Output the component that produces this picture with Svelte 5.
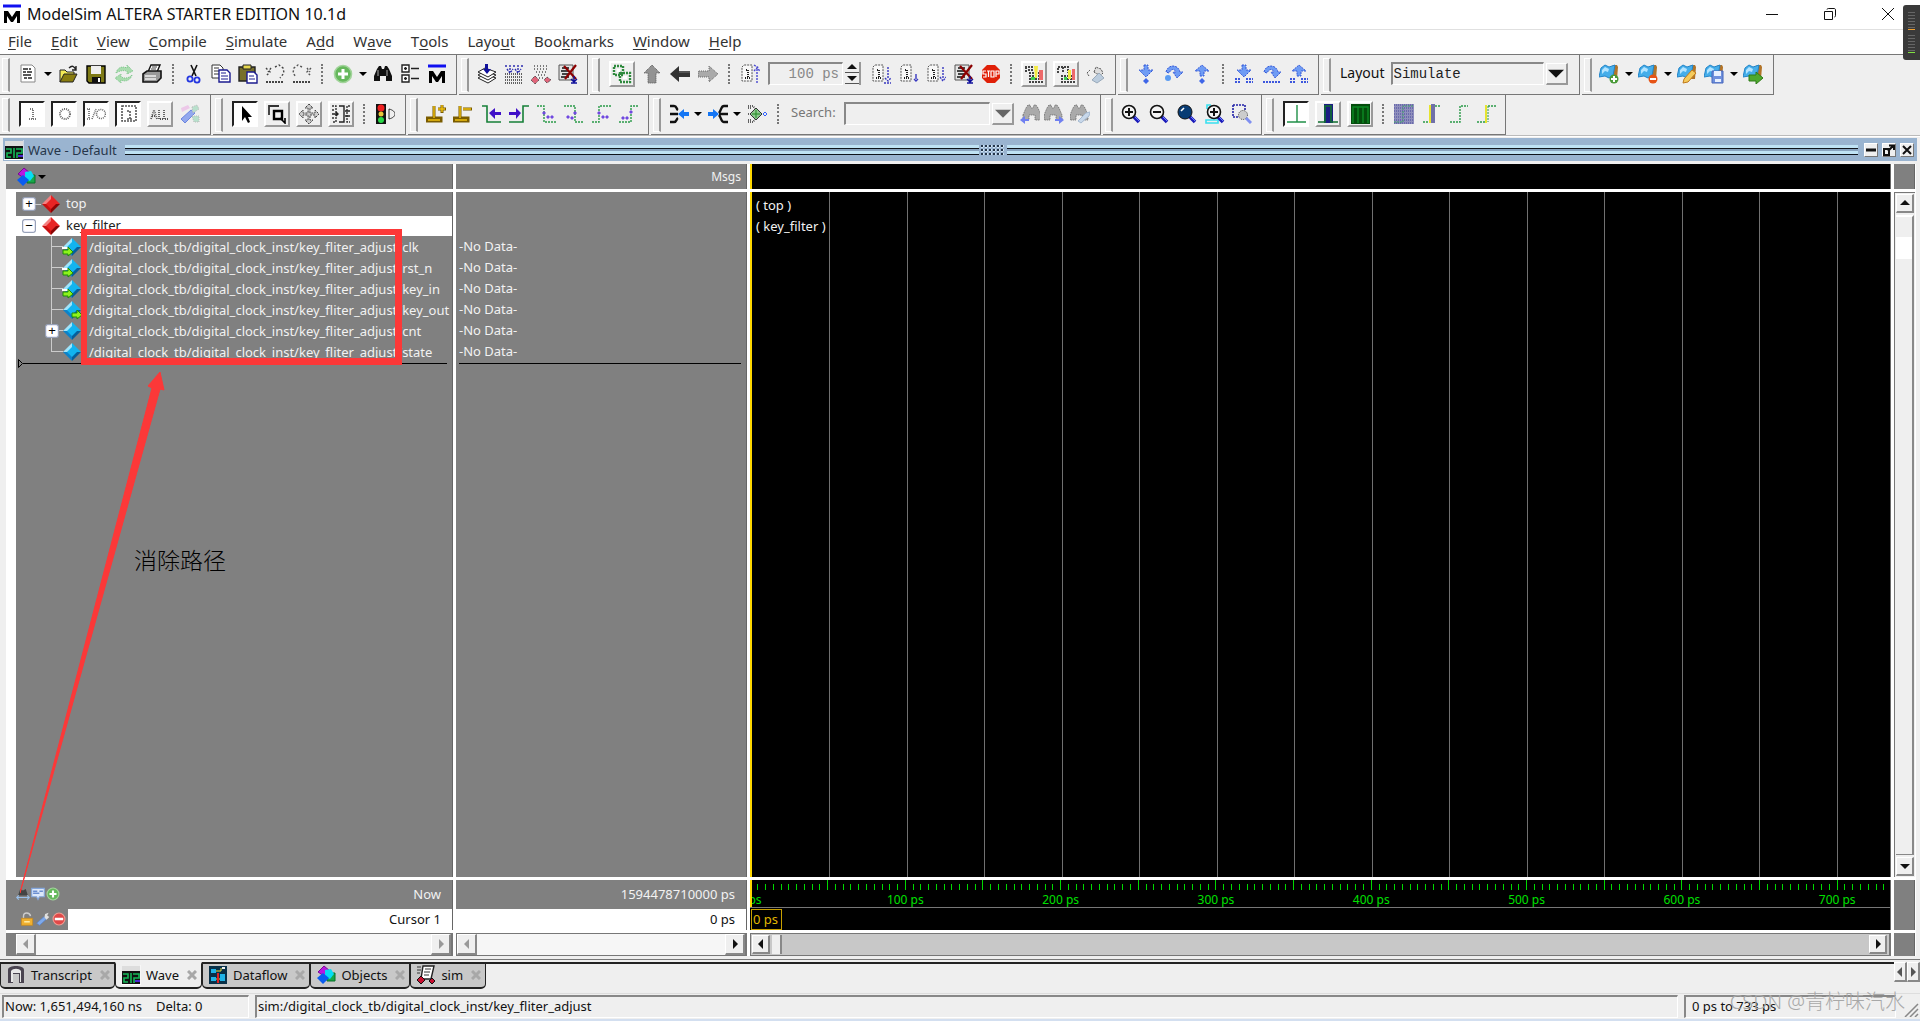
<script>
  const t = (icon, kind = 'tool') => ({ icon, kind });
  const sep = t('', 'sep');
  const more = t('', 'more');

  const toolRows = [
    [
      [t('doc', 'wide'), more, t('open', 'wide'), t('save', 'wide'), t('reload', 'wide'), t('print', 'wide'), sep,
        t('cut'), t('copy'), t('paste'), t('undo'), t('redo'), sep,
        t('add', 'wide'), more, t('find'), t('tree'), t('logo')],
      [t('compile'), t('compileAll'), t('simulate'), t('breakSim')],
      [t('env', 'raised'), t('up', 'wide'), t('back', 'wide'), t('forward', 'wide'), sep, t('restart'), t('', 'time'),
        t('run', 'wide'), t('runStep'), t('runAll', 'wide'), t('breakSim'), t('stop'), sep,
        t('profile', 'raised'), t('memory', 'raised'), t('hand')],
      [t('stepIn', 'wide'), t('stepOver', 'wide'), t('stepOut', 'wide'), sep,
        t('stepInCur', 'wide'), t('stepOverCur'), t('stepOutCur')],
      [t('', 'layout')],
      [t('markAdd'), more, t('markDel'), more, t('markEdit'), t('markSave'), more, t('markGo')]
    ],
    [
      [t('portIn', 'sunken'), t('portOut', 'sunken'), t('portIo', 'sunken'), t('portInt', 'sunken'), t('portAll', 'raised'), t('wand', 'wide')],
      [t('pointer', 'sunken'), t('zoomMode', 'raised'), t('pan', 'raised'), t('edit', 'raised'), sep, t('traffic', 'wide')],
      [t('cursorAdd'), t('cursorDel', 'wide'), t('prevEdge', 'wide'), t('nextEdge', 'wide'), t('prevFall'), t('nextFall', 'wide'), t('prevRise'), t('nextRise')],
      [t('merge'), more, t('split'), more, t('center', 'wide'), sep, t('', 'search'),
        t('findPrev', 'tight'), t('findNext', 'tight'), t('findOpt', 'wide')],
      [t('zoomIn', 'wide'), t('zoomOut', 'wide'), t('zoomFull', 'wide'), t('zoomCursor'), t('zoomRange')],
      [t('waveLow', 'sunken'), t('waveBlue', 'raised'), t('waveGreen', 'raised'), sep, t('fillBlue', 'wide'), t('edgeBlue'), t('edgeGreen'), t('edgeYellow')]
    ]
  ];

  const menus = [
    ['', 'F', 'ile'], ['', 'E', 'dit'], ['', 'V', 'iew'], ['', 'C', 'ompile'], ['', 'S', 'imulate'],
    ['A', 'd', 'd'], ['W', 'a', 've'], ['T', 'o', 'ols'], ['Layo', 'u', 't'], ['Boo', 'k', 'marks'],
    ['', 'W', 'indow'], ['', 'H', 'elp']
  ];

  const scope = '/digital_clock_tb/digital_clock_inst/key_fliter_adjust/';
  const signals = [
    { name: 'clk', icon: 'sigIn' },
    { name: 'rst_n', icon: 'sigIn' },
    { name: 'key_in', icon: 'sigIn' },
    { name: 'key_out', icon: 'sigOut' },
    { name: 'cnt', icon: 'sig', expandable: true },
    { name: 'state', icon: 'sig' }
  ];

  const tabs = [
    { name: 'Transcript', icon: 'transcript' },
    { name: 'Wave', icon: 'waveform', active: true },
    { name: 'Dataflow', icon: 'dataflow' },
    { name: 'Objects', icon: 'objects' },
    { name: 'sim', icon: 'sim' }
  ];

  // visible time range of the wave pane, in ps
  const range = 734;
  const pct = (ps) => `${(ps / range) * 100}%`;
  const grid = Array.from({ length: 14 }, (_, i) => (i + 1) * 50);
  const ticks = Array.from({ length: 146 }, (_, i) => (i + 1) * 5);
  const labels = Array.from({ length: 8 }, (_, i) => i * 100);

  // shared pieces of the icons
  const redX = '<path d="M6 2L18 15M18 1L7 15" stroke="#8b0000" stroke-width="2.2"/>';
  const flag = '<path d="M11 5l3-4h4l1 2-1 12h-4z" fill="#b27428"/><path d="M0 13l2-9 4-3 4 2 6-2-2 11-4 2-4-2z" fill="#45aeea" stroke="#2384c8"/><path d="M3 6l3-3 4 2-1 3-3-1-3 3z" fill="#b4e4ff"/>';
  const lens = '<path d="M12 12l6 6" stroke="#1a1ab8" stroke-width="3.6"/><path d="M13 12l5 5" stroke="#6a7dff"/>';
  const binoc = '<path d="M1 12l3-7 2-3h2l1 3h2l1-3h2l2 3 3 7v5h-6v-5H7v5H1z"/>';
  const stepDoc = '<path d="M2 3l2-2h8v16H2z" stroke="#555" stroke-dasharray="2 1" fill="#f8f8f8"/><path d="M6 6h2v8M5 14h6" stroke="#222" stroke-width="2" stroke-dasharray="1 1"/>';
  const box = '<path d="M1 1h14v15H1z" fill="#e4e4e4" stroke="#555"/><path d="M4 4h7M3 7h8M4 10h7M3 13h8" stroke="#111" stroke-width="1.6"/>';
  const gem = (a, b, c, d) => `<path d="M10 1L1 10h9z" fill="${a}"/><path d="M10 1l9 9h-9z" fill="${b}"/><path d="M1 10l9 9v-9z" fill="${c}"/><path d="M19 10l-9 9v-9z" fill="${d}"/><path d="M10 5l5 5-5 5-5-5z" fill="${b}"/>`;
  const blueGem = gem('#9fe4fb', '#12b4ef', '#0c82c8', '#075f9a');
  const greenArrow = '<path d="M1 13h5v-3l5 5-5 4v-2H1z" fill="#8df31c" stroke="#1d8b0a"/>';
  const cubes = '<path d="M11 8h8v8h-8z" fill="#18a848" stroke="#087028"/><path d="M2 7l6-6 6 5-6 5z" fill="#b818e0" stroke="#7a0894"/><path d="M9 5l6-1 3 5-4 5-5-2z" fill="#08dcf4"/><path d="M7 8l6 5-6 6-6-6z" fill="#0a5cf0"/>';
  const M = '<path d="M1 2h18" stroke="#1010f0" stroke-width="3"/><path d="M2 19V7h4l4 6 4-6h4v12h-3v-7l-4 6h-2l-4-6v7z" fill="#000"/>';
  const plus = '<circle cx="10" cy="10" r="8.5" fill="#66b85c" stroke="#a3d49c" stroke-width="1.6"/><path d="M10 5v10M5 10h10" stroke="#fff" stroke-width="3"/>';
  const blue = 'fill="#6f9cf4" stroke="#3458d8" stroke-dasharray="2 1"';
  const down = `<path d="M8 1h4v5h5l-7 7-7-7h5z" ${blue}/>`;
  const over = `<path d="M2 8c2-8 12-8 14 0h3l-6 6-4-6h3c-2-4-5-3-7 1z" ${blue}/>`;
  const upArrow = `<path d="M8 12h4V7h5l-7-6-7 6h5z" ${blue}/>`;
  const dots = '<path d="M1 15h6M12 15h7M1 18h6M12 18h7" stroke="#3d57dd" stroke-width="2" stroke-dasharray="2 1"/>';
  const edgeMark = (x, y) => `<path d="M${x} ${y - 2}l2 2-2 2-2-2z" fill="#7048e0"/>`;

  const icons = {
    logo: M,
    doc: '<path d="M3 1h11l3 3v14H3z" fill="#fff" stroke="#888"/><path d="M5 5h5M11 5h2M5 8h3M9 8h5M5 11h8M6 14h3M10 14h4" stroke="#222" stroke-width="1.4"/>',
    open: '<path d="M2 18V6h5l2 2h7v3" fill="#f4ea54" stroke="#222"/><path d="M2 18l4-8h13l-4 8z" fill="#8a7d10" stroke="#222"/><path d="M11 4c3-3 5-2 7 2M18 2v4h-4" stroke="#222" stroke-width="1.4"/>',
    save: '<path d="M1 2h18v17H3l-2-2z" fill="#7e7a16" stroke="#000" stroke-width="1.4"/><path d="M5 2h10v8H5z" fill="#eee"/><path d="M6 13h9v6H6z" fill="#111"/><path d="M12 14h2v4h-2z" fill="#fff"/>',
    reload: '<path d="M2 9c2-6 6-7 11-5V1l6 6-6 3V7C9 6 5 7 2 9zM18 11c-2 6-7 7-11 5v3l-6-5 6-4v3c4 2 8 1 11-2z" fill="#a9dcae" stroke="#7cc48a" stroke-dasharray="1 1"/>',
    print: '<path d="M6 8l3-7h9l-3 7z" fill="#fff" stroke="#111" stroke-width="1.4"/><path d="M1 10l4-3h14v7l-4 4H1z" fill="#999" stroke="#111" stroke-width="1.6"/><path d="M3 12h11M3 15h11" stroke="#eee" stroke-width="1.4"/><path d="M10 3h5M9 5h5" stroke="#444"/>',
    cut: '<path d="M7 1l5 11M13 1L8 12" stroke="#111" stroke-width="1.6"/><circle cx="6" cy="15" r="2.6" stroke="#2436e0" stroke-width="1.8"/><circle cx="13" cy="16" r="2.6" stroke="#2436e0" stroke-width="1.8"/>',
    copy: '<path d="M1 1h8l3 3v10H1z" fill="#fff" stroke="#333"/><path d="M3 4h5M3 7h7M3 10h7" stroke="#333"/><path d="M8 6h8l3 3v9H8z" fill="#fff" stroke="#1c1c90" stroke-width="1.4"/><path d="M10 9h5M10 12h7M10 15h7" stroke="#1c1c90"/>',
    paste: '<path d="M1 3h16v14H1z" fill="#77702a" stroke="#222" stroke-width="1.4"/><path d="M5 1h8v4H5z" fill="#e6d84e" stroke="#222"/><path d="M9 8h7l3 3v8H9z" fill="#fff" stroke="#1c1c90" stroke-width="1.4"/><path d="M11 12h5M11 15h6" stroke="#1c1c90"/>',
    undo: '<path d="M1 4l4 4-4 4M6 4l-3 4M10 3l4-2 4 3 1 5-4 5" stroke="#444" stroke-width="1.4" stroke-dasharray="2 2"/><path d="M1 18h18" stroke="#444" stroke-width="2" stroke-dasharray="2 1"/>',
    redo: '<path d="M19 4l-4 4 4 4M15 4l3 4M10 3L6 1 2 4 1 9l3 4" stroke="#555" stroke-width="1.4" stroke-dasharray="2 2"/><path d="M1 18h18" stroke="#444" stroke-width="2" stroke-dasharray="2 1"/>',
    add: plus,
    find: '<g fill="#111">' + binoc + '</g><path d="M5 6v6M14 6v6" stroke="#aaa"/>',
    tree: '<path d="M2 1h7v7H2zM2 11h7v7H2z" fill="#fff" stroke="#222" stroke-width="1.4"/><path d="M5.500 3v3M4 4.500h3M5.500 13v3M4 14.500h3M11 4.500h8M11 14.500h8" stroke="#222" stroke-width="1.4"/>',
    compile: '<path d="M1 14l7-4 11 4-8 5z" fill="#fff" stroke="#222"/><path d="M1 11l7-4 11 4-8 5z" fill="#fff" stroke="#222"/><path d="M1 8l7-4 11 4-8 5z" fill="#fff" stroke="#222"/><path d="M8 0h3v5h3l-4 5-4-5h2z" fill="#10109c"/>',
    compileAll: '<path d="M1 10h18M1 13h18M1 16h18M1 19h18" stroke="#333" stroke-width="1.4" stroke-dasharray="1 1"/><path d="M6 1v7M14 1v7M3 5l3 4 3-4M11 5l3 4 3-4M1 2h2M9 2h2M17 2h2" stroke="#2c2cb0" stroke-width="1.4" stroke-dasharray="2 1"/>',
    simulate: '<path d="M3 2h14M3 5h14M5 8h12M7 11h9M8 14h5" stroke="#555" stroke-width="1.6" stroke-dasharray="1 2"/><path d="M4 12l4 4-4 4-4-4zM16 13l4 3-4 3-3-3z" fill="#e0647a" stroke="#333" stroke-dasharray="1 1"/>',
    breakSim: box + redX + '<path d="M16 12v6M13 15l3 3 3-3M13 19h6" stroke="#10109c" stroke-width="1.4"/>',
    env: '<path d="M2 2h9v9H2zM8 9h10v9H8z" stroke="#2f8a3e" stroke-width="2.4" stroke-dasharray="2 1"/><path d="M5 5h3v3H5zM11 12h4v3h-4z" fill="#fff"/>',
    up: '<path d="M10 1l8 8h-4v10H6V9H2z" fill="#929292" stroke="#555" stroke-dasharray="1 1"/>',
    back: '<path d="M0 10l9-8v5h11v6H9v5z" fill="#333"/><path d="M9 8h11" stroke="#777"/>',
    forward: '<path d="M20 10l-9-8v5H0v6h11v5z" fill="#aaa" stroke="#666" stroke-dasharray="1 1"/>',
    restart: stepDoc + '<path d="M17 19V5M14 7l3-3 3 3M14 1l5 3" stroke="#4848d0" stroke-width="1.4" stroke-dasharray="2 1"/>',
    run: stepDoc + '<path d="M17 3v12M14 14l3 3 3-3M13 19h7" stroke="#3838c0" stroke-width="1.4" stroke-dasharray="2 1"/>',
    runStep: stepDoc + '<path d="M17 10v5M15 15l2 2 2-2" stroke="#3838c0" stroke-width="1.4"/>',
    runAll: stepDoc + '<path d="M17 3v12M14 13l3 4 3-4" stroke="#3838c0" stroke-width="1.4" stroke-dasharray="2 1"/>',
    stop: '<path d="M6 1h8l5 5v8l-5 5H6l-5-5V6z" fill="#e02008"/><path d="M5 7H2v3h3v3H2M6 7h3M7.500 7v6M10 7h3v6h-3zM15 13V7h3v3h-3" stroke="#fff" stroke-width="1.2"/>',
    profile: '<path d="M1 3h7v3H3M2 3v6M5 9h12M5 12h12M5 15h12M5 18h14" stroke="#444" stroke-width="2" stroke-dasharray="2 1"/><path d="M10 2h4l-1 12h-2z" fill="#f4ea42"/><path d="M15 6h4v10h-4z" fill="#ee6a6a"/><path d="M7 13h4v3H7z" fill="#3fd050"/>',
    memory: '<path d="M2 9V3h10v6M7 3v6M5 12h12M5 15h12M5 18h14" stroke="#444" stroke-width="2" stroke-dasharray="2 1"/><path d="M12 6h3v9h-3z" fill="#f4ea42"/><path d="M16 5h3v11h-3z" fill="#ee6a6a"/><path d="M8 13h3v3H8z" fill="#3fd050"/>',
    hand: '<path d="M1 9l3-3M3 12L1 9M8 8l2-5 2 1 3 1 2 4-2 2-4-1z" stroke="#555" fill="#ddd" stroke-dasharray="2 1"/><path d="M6 16l7-7 5 5-7 5z" fill="#bcd" stroke="#9ab"/>',
    stepIn: down + '<path d="M10 14l3 3-3 3-3-3z" fill="#3f66e8"/>',
    stepOver: over + '<circle cx="4" cy="14" r="3" fill="#5b9cf2"/>',
    stepOut: upArrow + '<path d="M10 14l3 3-3 3-3-3z" fill="#3f66e8"/>',
    stepInCur: down + dots, stepOverCur: over + '<path d="M1 18h18" stroke="#3d57dd" stroke-width="2" stroke-dasharray="2 1"/>', stepOutCur: upArrow + dots,
    markAdd: flag + '<circle cx="15" cy="15" r="4.500" fill="#4a9a38"/><path d="M15 12v6M12 15h6" stroke="#fff" stroke-width="2"/>',
    markDel: flag + '<circle cx="15" cy="15" r="4.500" fill="#e65316"/><path d="M12 15h6" stroke="#fff" stroke-width="2"/>',
    markEdit: flag + '<path d="M6 19l1-4 8-9 4 3-8 9z" fill="#f5cb5c" stroke="#c07a1c"/>',
    markSave: flag + '<path d="M8 7h11v12H8z" fill="#6f90dc" stroke="#4766bc"/><path d="M10 7h7v5h-7zM11 15h6v3h-6z" fill="#e8f0ff"/>',
    markGo: flag + '<path d="M6 11h7V8l7 6-7 6v-3H6z" fill="#4ea82e" stroke="#2f7c18"/>',
    portIn: '<path d="M8 5h3v10M7 15h7" stroke="#777" stroke-width="2" stroke-dasharray="1 1"/>',
    portOut: '<circle cx="11" cy="10" r="5" stroke="#666" stroke-width="2" stroke-dasharray="1 1"/>',
    portIo: '<path d="M1 5h4M3 5v10M1 15h4M6 15l4-10" stroke="#666" stroke-width="1.600" stroke-dasharray="1 1"/><circle cx="15" cy="10" r="4.500" stroke="#666" stroke-width="1.600" stroke-dasharray="1 1"/>',
    portInt: '<path d="M4 2h14v15H4zM9 7h3v8M9 15h6" stroke="#555" stroke-width="1.600" stroke-dasharray="2 1"/>',
    portAll: '<path d="M1 15l3-9 3 9M2 12h4M9 6v9h4M14 6v9h5" stroke="#555" stroke-width="1.800" stroke-dasharray="1 1"/>',
    wand: '<path d="M1 15L11 6l4 3L5 19z" fill="#92a8ee" stroke="#6c85df"/><path d="M1 4l7-3 2 3-8 4z" fill="#ecc8e8"/><path d="M12 3l5-2 2 4-6 4zM12 12h7v6h-5z" fill="#b8e0cc" stroke="#bbb" stroke-dasharray="1 1"/>',
    pointer: '<path d="M7 2v15l3-4 3 6 2-1-2-5h4z" fill="#000"/>',
    zoomMode: '<path d="M2 11V2h10" stroke="#333" stroke-width="1.8"/><path d="M7 7h8v8H7z" stroke="#000" stroke-width="2.400"/><path d="M13 14l5 5v-5" stroke="#000" stroke-width="1.6"/>',
    pan: '<path d="M10 0l4 4h-3v5h5V6l4 4-4 4v-3h-5v5h3l-4 4-4-4h3v-5H4v3l-4-4 4-4v3h5V4H6z" fill="#ccc" stroke="#444" stroke-dasharray="2 1"/>',
    edit: '<path d="M1 2h4v16H1M19 2h-3v16h3M1 6h3M1 14h3" stroke="#333" stroke-width="1.400" stroke-dasharray="2 1"/><path d="M8 2h5v16H8M1 10h6M14 7h5M14 12h5M5 8l2 2-2 2" stroke="#222" stroke-width="1.400"/>',
    traffic: '<path d="M1 0h10v20H1z" fill="#111"/><circle cx="6" cy="4" r="3.500" fill="#f02020"/><circle cx="6" cy="10" r="2.500" fill="#e8c838"/><circle cx="6" cy="16" r="3" fill="#28d848"/><path d="M14 5c4 1 6 3 6 5s-2 4-6 5z" stroke="#333"/>',
    cursorAdd: '<path d="M8 2v12M1 17h14v-3H1zM12 5h8M16 1v8" stroke="#7a5c00" stroke-width="3"/><path d="M8 2v12M2 16h12M12 5h7M16 1v7" stroke="#f0c010" stroke-width="1.400"/>',
    cursorDel: '<path d="M7 2v12M1 17h14v-3H1zM10 5h9" stroke="#7a5c00" stroke-width="3"/><path d="M7 2v12M2 16h12M10 5h8" stroke="#f0c010" stroke-width="1.400"/>',
    prevEdge: '<path d="M1 2h5v16h14" stroke="#168038" stroke-width="1.600"/><path d="M8 9l6-5v4h6v3h-6v4z" fill="#4010c8"/>',
    nextEdge: '<path d="M0 18h14V2h6" stroke="#168038" stroke-width="1.600"/><path d="M12 9L7 4v4H0v3h7v4z" fill="#4010c8"/>',
    prevFall: '<path d="M0 2h7v16h13" stroke="#2a9a48" stroke-width="1.400" stroke-dasharray="2 1"/>' + edgeMark(7, 9) + edgeMark(11, 13) + edgeMark(15, 13),
    nextFall: '<path d="M0 2h11v16h9" stroke="#2a9a48" stroke-width="1.400" stroke-dasharray="2 1"/>' + edgeMark(11, 9) + edgeMark(4, 13) + edgeMark(8, 14),
    prevRise: '<path d="M0 18h7V2h12" stroke="#2a9a48" stroke-width="1.400" stroke-dasharray="2 1"/>' + edgeMark(7, 9) + edgeMark(11, 13) + edgeMark(15, 13),
    nextRise: '<path d="M0 18h12V2h8" stroke="#2a9a48" stroke-width="1.400" stroke-dasharray="2 1"/>' + edgeMark(12, 8) + edgeMark(4, 14) + edgeMark(8, 14),
    merge: '<path d="M1 2h4c3 0 2 3 4 4M1 18h4c3 0 2-3 4-4M1 10h8" stroke="#111" stroke-width="2.400"/><path d="M9 10l6-5v3h5v4h-5v3z" fill="#1476f4"/>',
    split: '<path d="M20 2h-4c-3 0-2 3-5 7M20 18h-4c-3 0-2-3-5-7M20 10h-9" stroke="#111" stroke-width="2.400"/><path d="M11 10L5 5v3H0v4h5v3z" fill="#1476f4"/>',
    center: '<path d="M1 2h5l3 4M1 18h5l3-4M1 4h4M1 16h4M1 10h4" stroke="#333" stroke-width="1.600" stroke-dasharray="1 1"/><path d="M9 4l6 6-6 6-6-6z" fill="#8fc890" stroke="#333"/><path d="M9 6v8M5 10h8" stroke="#228b22"/><path d="M18 8l2 2-2 2-2-2z" stroke="#3060ff"/>',
    findPrev: '<g fill="#aaa" stroke="#666" stroke-dasharray="1 1" transform="translate(2 -1)">' + binoc + '</g><path d="M0 16l5-4v3h4v2H5v3z" fill="#7080f0"/>',
    findNext: '<g fill="#aaa" stroke="#666" stroke-dasharray="1 1" transform="translate(-1 -1)">' + binoc + '</g><path d="M20 16l-5-4v3h-4v2h4v3z" fill="#7080f0"/>',
    findOpt: '<g fill="#aaa" stroke="#666" stroke-dasharray="1 1" transform="translate(-1 -1)">' + binoc + '</g><path d="M8 17l8-8 4-1-1 4-8 7z" fill="#c8d8ea" stroke="#a5b9d0"/>',
    zoomIn: lens + '<circle cx="8" cy="8" r="6.500" fill="#f4f4f4" stroke="#111" stroke-width="1.600"/><path d="M8 4v8M4 8h8" stroke="#111" stroke-width="2"/>',
    zoomOut: lens + '<circle cx="8" cy="8" r="6.500" fill="#f4f4f4" stroke="#111" stroke-width="1.600"/><path d="M4 8h8" stroke="#111" stroke-width="2"/>',
    zoomFull: lens + '<circle cx="8" cy="8" r="7" fill="#083c74" stroke="#111"/><path d="M4 7l3-3" stroke="#fff" stroke-width="1.600"/>',
    zoomCursor: '<path d="M1 16h12v3H1zM2 5V1h4" stroke="#38e0f0" stroke-width="1.6"/>' + lens + '<circle cx="9" cy="8" r="6.500" fill="#f4f4f4" stroke="#111" stroke-width="1.600"/><path d="M9 4v8M5 8h8" stroke="#111" stroke-width="2"/>',
    zoomRange: '<path d="M1 1h12v5M1 1v12h6" stroke="#2222a8" stroke-width="1.600" stroke-dasharray="2 1"/><circle cx="11" cy="11" r="4.500" fill="#ccc" stroke="#444" stroke-dasharray="1 1"/><path d="M14 14l5 5" stroke="#7f8ff0" stroke-width="3"/>',
    waveLow: '<path d="M1 18h19M11 1v17" stroke="#209048" stroke-width="1.400"/>',
    waveBlue: '<path d="M6 0h9v19H6z" fill="#1c1c84"/><path d="M0 18h7V2h6v16h7" stroke="#107030" stroke-width="1.600"/>',
    waveGreen: '<path d="M1 0h19v20H1z" fill="#044c0c"/><path d="M3 19V3h5v16M8 15V3h5v16M13 3h5v16" stroke="#0c8a24" stroke-width="1.400"/>',
    fillBlue: '<path d="M0 0h20v20H0z" fill="#8f8fbc"/><path d="M0 1h20M0 4h20M0 7h20M0 10h20M0 13h20M0 16h20M0 19h20" stroke="#46469c" stroke-dasharray="1 1"/><path d="M0 18h9V2h11" stroke="#3f9f68" stroke-dasharray="2 1"/>',
    edgeBlue: '<path d="M9 0h4v19H9z" fill="#7070a8"/><path d="M1 18h6M13 2h6" stroke="#2a9a48" stroke-width="1.400" stroke-dasharray="2 1"/><path d="M8 1v18" stroke="#e6e430" stroke-width="2"/>',
    edgeGreen: '<path d="M1 18h10V2h8" stroke="#2a9a48" stroke-width="1.400" stroke-dasharray="2 1"/>',
    edgeYellow: '<path d="M1 18h9M12 2h8" stroke="#2a9a48" stroke-width="1.400" stroke-dasharray="2 1"/><path d="M10 1v18" stroke="#e6e430" stroke-width="2"/><path d="M12 2v16" stroke="#2a9a48" stroke-dasharray="2 1"/>',
    group: gem('#f58080', '#e82424', '#c81010', '#8c0404'),
    sig: blueGem,
    sigIn: blueGem + '<path d="M0 11h6" stroke="#fff" stroke-width="2"/>' + greenArrow,
    sigOut: blueGem + '<g transform="translate(9 0)">' + greenArrow + '</g>',
    objects: cubes,
    waveform: '<path d="M1 1h18v18H1z" fill="#111"/><path d="M1 1h18v5H1z" fill="#ddd"/><path d="M2 9h5v4H3v4h4M10 8v10M12 9h6v4h-5v5" stroke="#14b858" stroke-width="1.600"/><path d="M14 16h5" stroke="#4a28d0" stroke-width="2"/><path d="M0 19.500h20V0" stroke="#fff"/>',
    transcript: '<path d="M2 18V5c0-3 4-4 8-4s8 1 8 4v13h-5V9H7v9z" fill="#4a4450"/><path d="M5 17V6c2-3 8-3 10 0v11h-1V8H7v9z" fill="#e8e8e8"/>',
    dataflow: '<path d="M1 1h18v18H1z" fill="#083048"/><path d="M3 4h5v4H3zM3 12h5v4H3zM12 9h5v7h-5z" fill="#20b4e8"/><path d="M8 6h5V3M8 14h4" stroke="#f0e040"/><path d="M10 8v10" stroke="#e02020" stroke-width="2"/><path d="M14 3h3" stroke="#eee" stroke-width="2"/>',
    sim: '<path d="M7 1h11l-3 13H5z" fill="#fff" stroke="#222" stroke-width="1.400"/><path d="M9 4h6M8 7h6M8 10h5M1 2h4M1 5h4M1 8h3" stroke="#333"/><path d="M5 11l4 4-4 4-4-4zM16 13l3 3-3 3-3-3z" fill="#c81030" stroke="#111"/>',
    minus: '<circle cx="10" cy="10" r="8.500" fill="#e04848" stroke="#f09a90" stroke-width="1.600"/><path d="M4 10h12" stroke="#fff" stroke-width="3.600"/>',
    plus,
    lock: '<path d="M5 9V6c0-6 9-6 10 0" stroke="#ccc" stroke-width="2"/><path d="M2 9h16v10H2z" fill="#f0b030" stroke="#c88818"/><path d="M6 14h8" stroke="#fff2b0" stroke-width="2"/>',
    wrench: '<path d="M1 16L11 7l4 3L5 19z" fill="#7ea9ea" stroke="#5684d2"/><path d="M12 8l1-5 5-2-2 4 3 2-4 4z" fill="#e0e0e0"/>',
    pathToggle: '<g fill="#444"><path d="M3 12l3-9 4 2 4-2 3 9z"/></g><path d="M1 15h18M4 12l-3 3 3 3M16 12l3 3-3 3" stroke="#9ac0ea" stroke-width="1.600"/>',
    panel: '<path d="M1 2h18v12h-7l-2 4-2-4H1z" fill="#dce8fa" stroke="#84a6dc" stroke-width="1.600"/><path d="M3 6h6M3 9h9M12 6h5" stroke="#6b8ed0" stroke-width="2"/>'
  };

  let layout = $state('Simulate');
  let runLength = $state('100 ps');
  let query = $state('');
</script>

{#snippet icon(name, cls = '')}
  <svg class="icon {cls}" viewBox="0 0 20 20" fill="none" aria-hidden="true">{@html icons[name]}</svg>
{/snippet}

{#snippet arrow(dir)}
  <svg class="arrow {dir}" viewBox="0 0 10 10" aria-hidden="true"><path d="M7 0v10L2 5z" fill="currentColor" /></svg>
{/snippet}

{#snippet tool(item)}
  {#if item.kind === 'sep'}
    <span class="sep"></span>
  {:else if item.kind === 'more'}
    <button class="more" aria-label="More"></button>
  {:else if item.kind === 'time'}
    <div class="time">
      <input class="field" aria-label="Run length" bind:value={runLength} />
      <div class="spin">
        <button aria-label="Increase">{@render arrow('up')}</button>
        <button aria-label="Decrease">{@render arrow('down')}</button>
      </div>
    </div>
  {:else if item.kind === 'layout'}
    <div class="combo">
      <label for="layout">Layout</label>
      <select id="layout" class="field" bind:value={layout}>
        <option>Simulate</option>
      </select>
      <span class="drop">{@render arrow('down')}</span>
    </div>
  {:else if item.kind === 'search'}
    <div class="search">
      <label for="search">Search:</label>
      <input id="search" class="field" bind:value={query} />
      <button class="drop" aria-label="Search history">{@render arrow('down')}</button>
    </div>
  {:else}
    <button class="tool {item.kind}" aria-label={item.icon}>{@render icon(item.icon)}</button>
  {/if}
{/snippet}

{#snippet hscroll(cls)}
  <div class="hscroll {cls}">
    <button aria-label="Scroll left">{@render arrow('left')}</button>
    <span class="thumb"></span>
    <span class="trough"></span>
    <button class="end" aria-label="Scroll right">{@render arrow('right')}</button>
  </div>
{/snippet}

<div class="app">
  <header class="title">
    {@render icon('logo')}
    <h1>ModelSim ALTERA STARTER EDITION 10.1d</h1>
    <button aria-label="Minimize"><svg viewBox="0 0 12 12"><path d="M0 6.500h12" /></svg></button>
    <button aria-label="Restore"><svg viewBox="0 0 12 12"><path d="M.5 3.500h8v8h-8zM3 1.500c0-1 1-1 2-1h5c1 0 1.500.5 1.500 1.500v5c0 1 0 2-1 2" /></svg></button>
    <button aria-label="Close"><svg viewBox="0 0 12 12"><path d="M0 0l12 12M12 0L0 12" /></svg></button>
  </header>

  <nav class="menu">
    {#each menus as [pre, key, post]}
      <button>{pre}<u>{key}</u>{post}</button>
    {/each}
  </nav>

  <div class="toolbars">
    {#each toolRows as row}
      <div class="row">
        {#each row as bar}
          <div class="bar">
            {#each bar as item}
              {@render tool(item)}
            {/each}
          </div>
        {/each}
      </div>
    {/each}
  </div>

  <main class="window">
    <div class="caption">
      {@render icon('waveform')}
      <h2>Wave - Default</h2>
      <span class="stripes"></span>
      <span class="dots"></span>
      <span class="stripes"></span>
      <button aria-label="Hide"><svg viewBox="0 0 12 12"><path d="M1 6h10" stroke-width="3" /></svg></button>
      <button aria-label="Undock"><svg viewBox="0 0 12 12"><path d="M1 5h5v6H1zM5 7l5-5M6 1.500h5V6" /></svg></button>
      <button aria-label="Close"><svg viewBox="0 0 12 12"><path d="M2 2l8 8M10 2l-8 8" /></svg></button>
    </div>

    <div class="panes">
      <div class="cell head">
        {@render icon('objects')}
        <button class="more" aria-label="More"></button>
      </div>
      <div class="cell head msgs">Msgs</div>
      <div class="cell black cursor"></div>
      <div class="cell"></div>

      <div class="cell names">
        <div class="group">
          <button class="toggle" aria-label="Expand top">+</button>
          <i class="dash"></i>
          {@render icon('group')}
          <span>top</span>
        </div>
        <div class="group selected">
          <button class="toggle" aria-label="Collapse key_filter">−</button>
          <i class="blank"></i>
          {@render icon('group')}
          <span>key_filter</span>
        </div>
        {#each signals as s}
          <div class="signal">
            <i class="branch"></i>
            {#if s.expandable}<button class="toggle" aria-label="Expand {s.name}">+</button>{/if}
            {@render icon(s.icon)}
            <span>{scope}{s.name}</span>
          </div>
        {/each}
        <div class="insert">
          <svg viewBox="0 0 5 9"><path d="M.5.500v8l4-4z" fill="none" stroke="#000" /></svg>
        </div>
      </div>

      <div class="cell values">
        {#each signals as s}
          <div>-No Data-</div>
        {/each}
        <div class="rule"></div>
      </div>

      <div class="cell black cursor waves">
        <svg class="grid">
          {#each grid as ps}
            <line x1={pct(ps)} x2={pct(ps)} y1="0" y2="100%" />
          {/each}
        </svg>
        <div class="wave-label">( top )</div>
        <div class="wave-label">( key_filter )</div>
      </div>

      <div class="vscroll">
        <button aria-label="Scroll up">{@render arrow('up')}</button>
        <span class="vthumb"></span>
        <button aria-label="Scroll down">{@render arrow('down')}</button>
      </div>

      <div class="cell foot">
        <div class="now">
          {@render icon('pathToggle', 'small')}
          {@render icon('panel', 'small')}
          {@render icon('plus', 'small')}
          <span>Now</span>
        </div>
        <div class="cur">
          {@render icon('lock', 'small')}
          {@render icon('wrench', 'small')}
          {@render icon('minus', 'small')}
          <span>Cursor 1</span>
        </div>
      </div>
      <div class="cell foot">
        <div class="now"><span>1594478710000 ps</span></div>
        <div class="cur"><span>0 ps</span></div>
      </div>
      <div class="cell black time-axis">
        <svg class="ruler">
          {#each ticks as ps}
            <line x1={pct(ps)} x2={pct(ps)} y1={ps % 50 ? 4 : 0} y2="10" />
          {/each}
          {#each labels as ps}
            <text x={pct(ps)} y="24" text-anchor="middle">{ps} ps</text>
          {/each}
          <line class="now-line" x1="1" x2="1" y1="0" y2="28" />
        </svg>
        <div class="cursor-time"><span>0 ps</span></div>
      </div>
      <div class="cell"></div>

      {@render hscroll('name-scroll')}
      {@render hscroll('value-scroll')}
      {@render hscroll('wave-scroll')}
      <div class="cell"></div>
    </div>
  </main>

  <div class="tabs">
    {#each tabs as tab}
      <div class="tab" class:active={tab.active}>
        {@render icon(tab.icon)}
        <button class="name">{tab.name}</button>
        <button class="x" aria-label="Close {tab.name}"><svg viewBox="0 0 10 10"><path d="M1 1l8 8M9 1L1 9" /></svg></button>
      </div>
    {/each}
    <span class="fill"></span>
    <button class="step" aria-label="Previous tab">{@render arrow('left')}</button>
    <button class="step" aria-label="Next tab">{@render arrow('right')}</button>
  </div>

  <footer class="status">
    <div class="time-now"><span>Now: 1,651,494,160 ns</span><span>Delta: 0</span></div>
    <div class="scope">sim:/digital_clock_tb/digital_clock_inst/key_fliter_adjust</div>
    <div class="span">0 ps to 733 ps</div>
    <svg class="sizer" viewBox="0 0 14 14"><path d="M1 14L14 1M6 14l8-8M11 14l3-3" stroke="#888" stroke-width="1.500" /></svg>
  </footer>

  <!-- annotations laid over the window -->
  <div class="highlight"></div>
  <svg class="pointer" viewBox="0 0 146 522"><path d="M0 521L132 16l-4-2L140 0l4 18-4-1z" fill="#fc3838" stroke="#fc3838" /></svg>
  <div class="note">消除路径</div>
  <div class="watermark">CSDN @青柠味汽水</div>
  <div class="meter"><i></i><i></i></div>
</div>

<style>
  :global(body) {
    margin: 0;
    background: #efefef;
  }
  .app {
    position: relative;
    display: flex;
    flex-direction: column;
    min-height: 100vh;
    box-sizing: border-box;
    border-bottom: 2px solid #d3dff0;
    background: #efefef;
    color: #111;
    font: 13px/20px "Noto Sans", "Open Sans", sans-serif;
    overflow: hidden;
  }
  .app * {
    box-sizing: border-box;
  }
  button {
    display: flex;
    align-items: center;
    justify-content: center;
    margin: 0;
    padding: 0;
    border: 0;
    background: none;
    color: inherit;
    font: inherit;
  }
  h1, h2 {
    margin: 0;
    font-weight: 400;
  }
  svg {
    display: block;
    flex: none;
  }
  .icon {
    width: 20px;
    height: 20px;
  }
  .icon.small {
    width: 14px;
    height: 14px;
  }
  .arrow {
    width: 10px;
    height: 10px;
  }
  .arrow.right { transform: rotate(180deg); }
  .arrow.up { transform: rotate(90deg); }
  .arrow.down { transform: rotate(-90deg); }

  .title {
    display: flex;
    align-items: center;
    height: 30px;
    padding: 0 16px 2px 2px;
    border-bottom: 1px solid #e0e0e0;
    background: #fff;
  }
  .title h1 {
    flex: 1;
    padding-left: 5px;
    font-size: 16px;
  }
  .title button {
    width: 32px;
    height: 27px;
    margin-left: 26px;
  }
  .title svg:not(.icon) {
    width: 12px;
    height: 12px;
    fill: none;
    stroke: #111;
  }

  .menu {
    display: flex;
    gap: 19px;
    height: 24px;
    padding: 0 8px 2px;
    background: #fff;
    font-size: 15px;
    color: #333;
  }
  .menu u {
    text-underline-offset: 2px;
  }

  .toolbars {
    border-top: 1px solid #777;
    border-bottom: 1px solid #bbb;
  }
  .row {
    display: flex;
    gap: 2px;
    height: 40px;
  }
  .bar {
    position: relative;
    display: flex;
    align-items: center;
    padding: 0 6px 2px 14px;
    border-right: 1px solid #777;
    border-bottom: 1px solid #777;
  }
  .bar:has(> .raised:first-child), .bar:has(> .sunken:first-child) {
    padding-left: 16px;
  }
  .bar::before {
    content: "";
    position: absolute;
    left: 2px;
    top: 3px;
    bottom: 2px;
    width: 5px;
    border: 1px solid #fff;
    border-right: 2px solid #999;
  }
  .tool { width: 27px; height: 26px; }
  .tool.wide { width: 28px; }
  .tool.tight { width: 24px; }
  .tool.raised, .tool.sunken {
    width: 26px;
    margin: 0 3px;
    border: 2px solid #fff;
    border-right-color: #999;
    border-bottom-color: #999;
  }
  .tool.sunken {
    border-color: #222 #fff #fff #222;
    background: #fff;
  }
  .sep {
    width: 2px;
    height: 20px;
    margin: 0 6px;
    border-left: 2px dotted #777;
  }
  .more {
    width: 12px;
    height: 20px;
  }
  .more::after {
    content: "";
    border: 4px solid transparent;
    border-top-color: #000;
    border-bottom: 0;
  }
  .field {
    height: 23px;
    border: 1px solid #fff;
    border-top: 2px solid #888;
    border-left: 2px solid #888;
    border-radius: 0;
    background: #efefef;
    appearance: none;
    outline: 0;
    font: 14px/20px "Liberation Mono", monospace;
    color: #222;
  }
  .time {
    display: flex;
    gap: 2px;
    padding: 0 6px 0 5px;
  }
  .time .field {
    width: 75px;
    padding: 0 3px 0 0;
    color: #888;
    text-align: right;
  }
  .spin {
    width: 16px;
    border-right: 2px solid #999;
  }
  .spin button {
    width: 14px;
    height: 11px;
    border-bottom: 1px solid #555;
  }
  .combo, .search {
    display: flex;
    align-items: center;
  }
  .combo label {
    padding: 0 6px 2px 5px;
    font-size: 14px;
  }
  .combo .field {
    width: 153px;
    padding: 0 1px;
  }
  .drop {
    display: flex;
    align-items: center;
    justify-content: center;
    width: 22px;
    height: 22px;
    margin-left: 2px;
    border: 1px solid #fff;
    border-right: 2px solid #999;
    border-bottom: 2px solid #999;
  }
  .drop .arrow {
    width: 16px;
    height: 16px;
  }
  .combo .drop { margin-right: 5px; }
  .search .drop { color: #666; margin-right: 4px; }
  .search label {
    width: 59px;
    padding: 0 0 4px 6px;
    color: #777;
  }
  .search .field {
    width: 146px;
  }

  .window {
    display: flex;
    flex-direction: column;
    flex: 1;
    padding: 1px 3px 3px;
    border-top: 1px solid #fff;
    border-bottom: 1px solid #777;
  }
  .caption {
    display: flex;
    align-items: center;
    height: 23px;
    margin-bottom: 3px;
    padding: 0 3px 0 1px;
    background: #9ab4d0;
    color: #26364a;
  }
  .caption h2 {
    padding: 0 8px 0 4px;
    font-size: 13px;
  }
  .stripes {
    height: 10px;
    background: linear-gradient(#bfe2f4 0 3px, #10141c 3px 4px, #8aa4c0 4px 6px, #bfe2f4 6px 9px, #10141c 9px);
  }
  .caption .stripes:nth-of-type(1) { flex: 854 1 0; }
  .caption .stripes:nth-of-type(3) { flex: 851 1 0; margin-right: 2px; }
  .dots {
    width: 24px;
    height: 10px;
    margin: 0 2px;
    background: radial-gradient(circle at 1px 1px, #26364a 1px, #cfe4f4 1px 2px, transparent 2px) 0 0 / 4px 4px;
  }
  .caption button {
    width: 14px;
    height: 14px;
    margin-left: 4px;
    border: 1px solid #fff;
    border-right-color: #777;
    border-bottom-color: #777;
    background: #efefef;
  }
  .caption button svg {
    width: 12px;
    height: 12px;
    fill: none;
    stroke: #111;
    stroke-width: 2;
  }

  .panes {
    display: grid;
    flex: 1;
    grid-template-columns: 447px 291px 1fr 21px;
    grid-template-rows: 25px 1fr 50px 23px;
    gap: 3px;
    margin: 0 1px 0 3px;
    border-right: 1px solid #fff;
    background: #fff;
  }
  .cell {
    border-right: 1px solid #666;
    background: #808080;
    color: #f2f2f2;
    min-width: 0;
  }
  .black {
    background: #000;
  }
  .cursor {
    border-left: 2px solid #ffd800;
  }
  .head {
    display: flex;
    align-items: center;
    padding-left: 10px;
  }
  .msgs {
    justify-content: flex-end;
    padding-right: 5px;
    font-size: 12px;
  }
  .names {
    padding-bottom: 10px;
    border-left: 10px solid #fff;
    white-space: nowrap;
  }
  .group {
    display: flex;
    align-items: center;
    height: 24px;
    padding-left: 7px;
  }
  .group.selected {
    height: 20px;
    background: #fff;
    color: #222;
  }
  .group span {
    padding: 0 0 2px 5px;
  }
  .toggle {
    width: 12px;
    height: 12px;
    border: 1px solid #e8e8f4;
    border-radius: 2px;
    background: #fff;
    box-shadow: 0 0 0 1px #98a2b8;
    color: #000;
    font: 13px/10px "Liberation Sans", sans-serif;
  }
  .dash, .blank {
    width: 6px;
    height: 1px;
  }
  .dash {
    background: #ccc;
  }
  .signal {
    position: relative;
    display: flex;
    align-items: center;
    height: 21px;
    padding-left: 46px;
  }
  .signal span {
    padding-left: 7px;
  }
  .branch {
    position: absolute;
    left: 35px;
    top: 0;
    width: 12px;
    height: 11px;
    border-left: 1px solid #ccc;
    border-bottom: 1px solid #ccc;
  }
  .signal:not(:nth-last-child(2)) .branch::after {
    content: "";
    position: absolute;
    left: -1px;
    top: 10px;
    height: 11px;
    border-left: 1px solid #ccc;
  }
  .signal .toggle {
    position: absolute;
    left: 30px;
  }
  .insert {
    display: flex;
    align-items: center;
    height: 1px;
    margin: 1px 5px 0 7px;
    background: #000;
  }
  .insert svg {
    width: 5px;
    height: 9px;
    margin-left: -5px;
  }
  .values {
    padding: 44px 5px 0 3px;
  }
  .values div {
    height: 21px;
  }
  .values .rule {
    height: 1px;
    margin-top: 1px;
    background: #000;
  }
  .waves {
    position: relative;
    padding: 3px 0 0 4px;
  }
  .grid {
    position: absolute;
    inset: 0;
    width: 100%;
    height: 100%;
  }
  .grid line {
    stroke: #707070;
    shape-rendering: crispEdges;
  }
  .wave-label {
    position: relative;
    width: fit-content;
    height: 21px;
    padding-right: 3px;
    background: #000;
  }
  .now, .cur {
    display: flex;
    align-items: center;
    height: 28px;
    padding-left: 10px;
  }
  .now {
    gap: 1px;
  }
  .now span {
    flex: 1;
    padding-right: 11px;
    text-align: right;
  }
  .cur {
    gap: 2px;
    height: 22px;
    padding-left: 14px;
  }
  .cur span {
    flex: 1;
    height: 21px;
    padding-right: 11px;
    background: #fff;
    color: #111;
    text-align: right;
  }
  .foot .cur span:only-child {
    margin-left: -14px;
  }
  .time-axis {
    overflow: hidden;
  }
  .ruler {
    width: 100%;
    height: 28px;
    border-bottom: 1px solid #777;
    overflow: hidden;
  }
  .ruler line {
    stroke: #00d800;
    shape-rendering: crispEdges;
  }
  .ruler .now-line {
    stroke: #ffd800;
    stroke-width: 2;
  }
  .ruler text {
    fill: #00e000;
    font-size: 12px;
  }
  .cursor-time {
    display: flex;
    padding: 1px 0 0 1px;
  }
  .cursor-time span {
    height: 21px;
    padding: 0 3px 0 1px;
    border: 1px solid #c8a000;
    color: #e0b800;
    line-height: 19px;
  }

  .hscroll {
    display: flex;
    border: 1px solid #777;
    border-right-width: 2px;
    background: #f6f6f6;
  }
  .hscroll button, .vscroll button {
    width: 20px;
    border: 1px solid #fff;
    border-right: 2px solid #888;
    border-bottom: 2px solid #888;
    background: #efefef;
  }
  .name-scroll {
    border-left: 10px solid #808080;
    color: #999;
  }
  .value-scroll button:first-child {
    color: #999;
  }
  .trough {
    flex: 1;
  }
  .thumb {
    display: none;
  }
  .wave-scroll {
    padding: 1px 2px 1px 1px;
    background: #c8c8c8;
  }
  .wave-scroll button {
    width: 18px;
  }
  .wave-scroll .thumb {
    display: block;
    width: 10px;
    margin-left: 2px;
    border-right: 2px solid #888;
    background: #efefef;
  }
  .vscroll {
    display: flex;
    flex-direction: column;
    padding: 1px;
    border-top: 1px solid #777;
    border-left: 1px solid #777;
    background: #efefef;
  }
  .vscroll button {
    width: 18px;
    height: 19px;
  }
  .vthumb {
    flex: 1;
    width: 18px;
    margin: 2px 0;
    border-top: 2px solid #fff;
    border-right: 2px solid #888;
    border-bottom: 1px solid #888;
    background: linear-gradient(#efefef 20px, #fff 20px 42px, #efefef 42px);
  }

  .tabs {
    display: flex;
    height: 33px;
    padding-top: 2px;
  }
  .tab {
    display: flex;
    align-items: center;
    height: 27px;
    padding: 0 4px 2px 5px;
    border: 1px solid #222;
    border-top: 2px solid #222;
    border-bottom-width: 2px;
    border-radius: 0 0 5px 5px;
    background: #c8c8c8;
  }
  .tab.active {
    border-top-color: #efefef;
    background: #efefef;
  }
  .tab .name {
    padding: 0 8px 0 5px;
  }
  .x svg {
    width: 10px;
    height: 10px;
    stroke: #a8a8a8;
    stroke-width: 3;
  }
  .tabs .fill {
    flex: 1;
    border-top: 2px solid #222;
  }
  .step {
    width: 13px;
    height: 20px;
    border: 1px solid #fff;
    border-right: 2px solid #888;
    border-bottom: 2px solid #888;
    color: #555;
  }

  .status {
    display: flex;
    gap: 6px;
    height: 26px;
    padding: 1px 0 2px 2px;
    border-top: 1px solid #ddd;
  }
  .status div {
    height: 23px;
    padding-left: 1px;
    border: 1px solid #fff;
    border-top: 2px solid #888;
    border-left: 2px solid #888;
    line-height: 18px;
  }
  .status .time-now {
    display: flex;
    gap: 14px;
    width: 247px;
  }
  .status .scope { flex: 1; }
  .status .span { width: 212px; padding-left: 6px; }
  .sizer {
    align-self: flex-end;
    width: 18px;
    height: 14px;
  }

  .highlight {
    position: absolute;
    left: 81px;
    top: 229px;
    width: 321px;
    height: 136px;
    border: 6px solid #fc3838;
    border-right-width: 7px;
    border-bottom-width: 7px;
  }
  .pointer {
    position: absolute;
    left: 20px;
    top: 372px;
    width: 146px;
    height: 522px;
  }
  .note {
    position: absolute;
    left: 134px;
    top: 545px;
    color: #000;
    font: 23px/28px "Noto Sans CJK SC", sans-serif;
    font-weight: 300;
  }
  .watermark {
    position: absolute;
    right: 15px;
    bottom: 5px;
    color: #a8a8a8;
    font: 300 20px/24px "Noto Sans", "Noto Sans CJK SC", sans-serif;
  }
  .meter {
    position: absolute;
    right: 0;
    top: 5px;
    width: 17px;
    height: 55px;
    padding: 7px 5px;
    border-radius: 3px 0 0 3px;
    background: #3a3a3a;
  }
  .meter i {
    display: block;
    height: 18px;
    margin-bottom: 5px;
    border-bottom: 1px solid #f0a030;
    background: repeating-linear-gradient(#666 0 1px, transparent 1px 3px);
  }
  .meter i:last-child {
    border-color: #80e040;
  }
</style>
